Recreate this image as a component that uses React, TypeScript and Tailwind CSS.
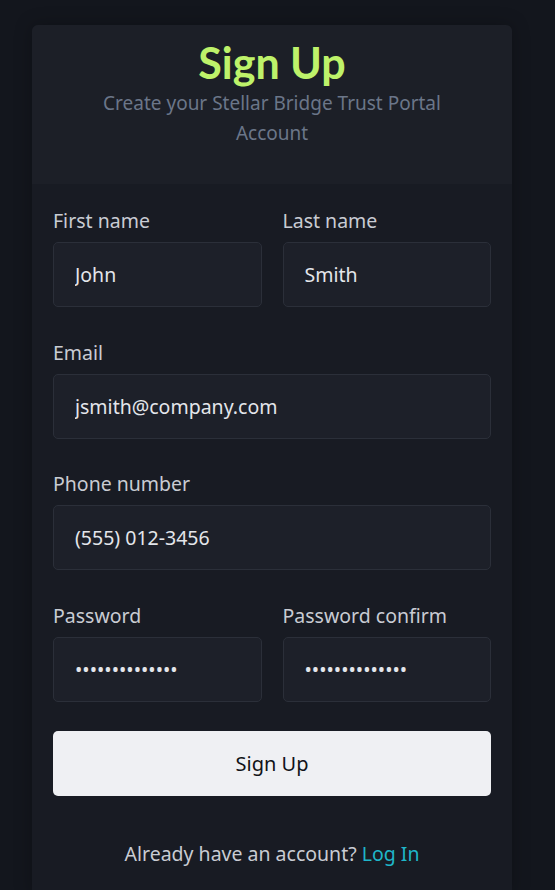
import { useState } from "react";

function Field({
  label,
  value,
  type = "text",
}: {
  label: string;
  value: string;
  type?: string;
}) {
  const [v, setV] = useState(value);
  return (
    <label className="flex flex-col">
      <span className="text-[19.5px] leading-[28px] text-[#c9ccd3]">{label}</span>
      <input
        type={type}
        value={v}
        onChange={(e) => setV(e.target.value)}
        className="mt-[7px] h-[65px] w-full rounded-[5px] border border-[#2b2f39] bg-[#1d2029] px-[21px] text-[19.5px] text-[#e4e6eb] outline-none"
      />
    </label>
  );
}

export default function App() {
  return (
    <div
      className="min-h-[890px] bg-[#13161d] pt-[25px] pl-[32px]"
      style={{ fontFamily: '"Noto Sans", "Open Sans", sans-serif' }}
    >
      <div className="w-[480px] min-h-[870px] overflow-hidden rounded-t-[6px] bg-[#181b23] shadow-[0_0_18px_rgba(0,0,0,0.25)]">
        {/* header */}
        <div className="h-[159px] bg-[#1c1f27] px-5 pt-[13px] text-center">
          <h1
            className="text-[43px] leading-[50px] font-bold text-[#bef26a]"
            style={{ fontFamily: "Lato, sans-serif" }}
          >
            Sign Up
          </h1>
          <p className="mx-auto max-w-[370px] text-[19px] leading-[30px] text-[#6b7689]">
            Create your Stellar Bridge Trust Portal Account
          </p>
        </div>

        {/* form */}
        <form className="flex flex-col gap-[31.5px] px-[21px] pt-[23px]" onSubmit={(e) => e.preventDefault()}>
          <div className="grid grid-cols-2 gap-[21px]">
            <Field label="First name" value="John" />
            <Field label="Last name" value="Smith" />
          </div>
          <Field label="Email" value="jsmith@company.com" />
          <Field label="Phone number" value="(555) 012-3456" />
          <div className="grid grid-cols-2 gap-[21px]">
            <Field label="Password" value="abcdefghijklmn" type="password" />
            <Field label="Password confirm" value="abcdefghijklmn" type="password" />
          </div>
          <button
            type="submit"
            className="-mt-[2px] h-[65px] w-full rounded-[5px] bg-[#eff0f3] text-[20px] text-[#111318]"
          >
            Sign Up
          </button>
        </form>

        <p className="mt-[44px] text-center text-[19.5px] leading-[28px] text-[#c9ccd3]">
          Already have an account? <a className="text-[#1fb6c9]" href="#">Log In</a>
        </p>
      </div>
    </div>
  );
}
